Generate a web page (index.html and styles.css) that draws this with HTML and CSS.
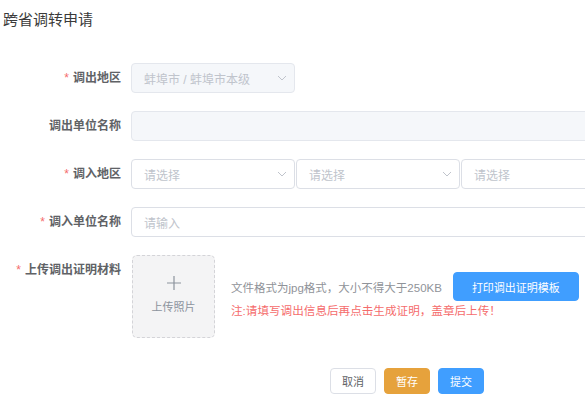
FILE: index.html
```html
<!DOCTYPE html>
<html lang="zh">
<head>
<meta charset="utf-8">
<link rel="stylesheet" href="styles.css">
</head>
<body>
<div class="page">
  <div class="title">跨省调转申请</div>
  <div class="form">
    <div class="row">
      <div class="label"><span class="req">*</span>调出地区</div>
      <div class="select disabled">
        <span class="val">蚌埠市 / 蚌埠市本级</span>
        <svg class="chev" viewBox="0 0 10 6" width="10" height="6"><path d="M1 1 L5 5 L9 1" fill="none" stroke="#c0c4cc" stroke-width="1"/></svg>
      </div>
    </div>
    <div class="row">
      <div class="label">调出单位名称</div>
      <div class="input wide disabled"></div>
    </div>
    <div class="row">
      <div class="label"><span class="req">*</span>调入地区</div>
      <div class="group">
        <div class="select">
          <span class="ph">请选择</span>
          <svg class="chev" viewBox="0 0 10 6" width="10" height="6"><path d="M1 1 L5 5 L9 1" fill="none" stroke="#c0c4cc" stroke-width="1"/></svg>
        </div>
        <div class="select">
          <span class="ph">请选择</span>
          <svg class="chev" viewBox="0 0 10 6" width="10" height="6"><path d="M1 1 L5 5 L9 1" fill="none" stroke="#c0c4cc" stroke-width="1"/></svg>
        </div>
        <div class="select">
          <span class="ph">请选择</span>
          <svg class="chev" viewBox="0 0 10 6" width="10" height="6"><path d="M1 1 L5 5 L9 1" fill="none" stroke="#c0c4cc" stroke-width="1"/></svg>
        </div>
      </div>
    </div>
    <div class="row">
      <div class="label"><span class="req">*</span>调入单位名称</div>
      <div class="input wide"><span class="ph">请输入</span></div>
    </div>
    <div class="row upload-row">
      <div class="label"><span class="req">*</span>上传调出证明材料</div>
      <div class="upload">
        <svg class="plus" viewBox="0 0 14 14" width="14" height="14"><path d="M7 0 V14 M0 7 H14" stroke="#8c939d" stroke-width="1.2" fill="none"/></svg>
        <span class="up-text">上传照片</span>
      </div>
      <div class="info">
        <div class="info-line">
          <span class="hint">文件格式为jpg格式，大小不得大于250KB</span>
          <button class="btn primary print">打印调出证明模板</button>
        </div>
        <div class="warn">注:请填写调出信息后再点击生成证明，盖章后上传！</div>
      </div>
    </div>
  </div>
  <div class="footer">
    <button class="btn plain">取消</button>
    <button class="btn warning">暂存</button>
    <button class="btn primary">提交</button>
  </div>
</div>
</body>
</html>
```

FILE: styles.css
```css
html, body {
  margin: 0;
  padding: 0;
  background: #fff;
  overflow: hidden;
}
body {
  font-family: "Liberation Sans", "Noto Sans CJK SC", sans-serif;
  color: #606266;
}
.page {
  width: 585px;
  overflow: hidden;
}
.title {
  padding: 10px 0 0 3px;
  font-size: 15px;
  line-height: 20px;
  font-weight: normal;
  color: #3a3a3a;
}
.form {
  margin-top: 33px;
}
.row {
  display: flex;
  align-items: flex-start;
  margin-bottom: 18px;
}
.label {
  width: 131px;
  flex: none;
  box-sizing: border-box;
  padding-right: 10px;
  text-align: right;
  font-size: 12px;
  line-height: 30px;
  font-weight: bold;
  color: #606266;
}
.req {
  color: #f56c6c;
  margin-right: 4px;
  font-weight: normal;
}
.select, .input {
  box-sizing: border-box;
  height: 30px;
  border: 1px solid #dcdfe6;
  border-radius: 4px;
  background: #fff;
  display: flex;
  align-items: center;
  padding: 0 7px 0 12px;
  font-size: 12px;
  flex: none;
}
.select {
  width: 164px;
  justify-content: space-between;
}
.disabled {
  background: #f5f7fa;
  border-color: #e4e7ed;
}
.val, .ph {
  color: #c0c4cc;
}
.chev {
  display: block;
}
.wide {
  width: 500px;
}
.group {
  display: flex;
  gap: 1px;
}
.upload {
  box-sizing: border-box;
  width: 83px;
  height: 83px;
  margin-left: 1px;
  flex: none;
  border: 1px dashed #d4d4d8;
  border-radius: 5px;
  background: #f4f4f5;
  display: flex;
  flex-direction: column;
  align-items: center;
  padding-top: 20px;
}
.plus {
  display: block;
}
.up-text {
  margin-top: 10px;
  font-size: 11px;
  line-height: 14px;
  color: #8c939d;
}
.info {
  margin-left: 16px;
  padding-top: 17px;
}
.info-line {
  display: flex;
  align-items: center;
}
.hint {
  font-size: 11.5px;
  color: #909399;
  white-space: nowrap;
}
.print {
  margin-left: 11px;
  width: 126px;
  height: 29px;
  font-size: 11.5px;
  flex: none;
}
.warn {
  margin-top: 2px;
  font-size: 11.6px;
  line-height: 16px;
  color: #f56c6c;
  white-space: nowrap;
}
.btn {
  box-sizing: border-box;
  border: 1px solid transparent;
  border-radius: 4px;
  font-family: inherit;
  font-size: 11px;
  padding: 0;
  cursor: pointer;
}
.primary {
  background: #409eff;
  border-color: #409eff;
  color: #fff;
}
.warning {
  background: #e6a23c;
  border-color: #e6a23c;
  color: #fff;
}
.plain {
  background: #fff;
  border-color: #dcdfe6;
  color: #606266;
}
.footer {
  display: flex;
  gap: 8px;
  padding-left: 330px;
  margin-top: 30px;
}
.footer .btn {
  width: 46px;
  height: 26px;
}
```
